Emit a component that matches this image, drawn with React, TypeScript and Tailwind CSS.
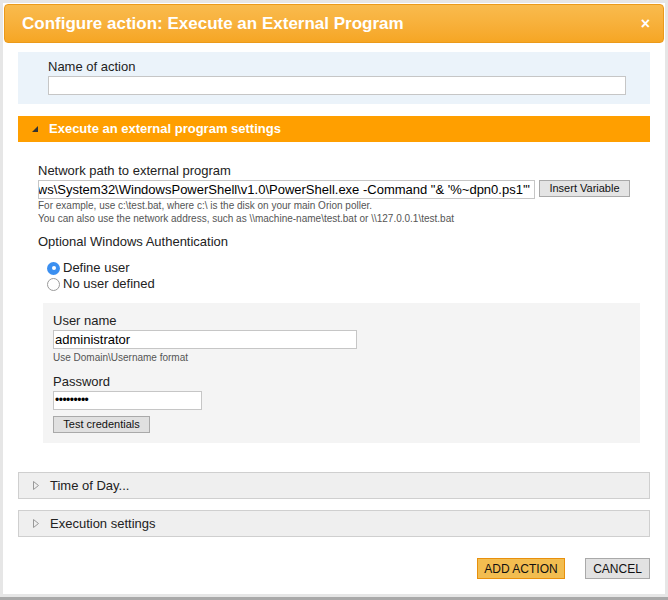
import React from 'react';

const Caret = ({ open }: { open?: boolean }) =>
  open ? (
    <svg width="6" height="6" viewBox="0 0 6 6" className="shrink-0">
      <path d="M6 0 L6 6 L0 6 Z" fill="#333" />
    </svg>
  ) : (
    <svg width="6" height="9" viewBox="0 0 6 9" className="shrink-0">
      <path d="M0.5 0.5 L5.5 4.5 L0.5 8.5 Z" fill="none" stroke="#999" strokeWidth="1" />
    </svg>
  );

const Radio = ({ checked, label }: { checked?: boolean; label: string }) => (
  <label className="flex items-center h-[16px] text-[13px] text-[#222]">
    {checked ? (
      <span className="w-[13px] h-[13px] rounded-full bg-[#3b8ff0] flex items-center justify-center">
        <span className="w-[4px] h-[4px] rounded-full bg-white" />
      </span>
    ) : (
      <span className="w-[13px] h-[13px] rounded-full border border-[#9a9a9a] bg-white" />
    )}
    <span className="ml-[3px]">{label}</span>
  </label>
);

const CollapsedBar = ({ title }: { title: string }) => (
  <div className="h-[27px] bg-[#efefef] border border-[#cfcfcf] flex items-center pl-[14px] gap-[11px] text-[13px] text-[#222]">
    <Caret />
    <span>{title}</span>
  </div>
);

const App = () => {
  return (
    <div className="w-[668px] h-[600px] bg-[#a9a9a9] font-['Liberation_Sans',Arial,sans-serif]">
      <div className="h-[597px] bg-white border-[3px] border-[#e6e6e6] p-[1px] flex flex-col">
        {/* header */}
        <div className="h-[39px] rounded-[4px] border border-[#eb9a1a] bg-gradient-to-b from-[#f9bb4d] to-[#f6a623] flex items-center justify-between pl-[17px] pr-[13px]">
          <h1 className="text-white font-bold text-[17px]">Configure action: Execute an External Program</h1>
          <span className="text-white font-bold text-[16px] leading-none">×</span>
        </div>

        <div className="px-[14px] pt-[9px] flex flex-col">
          {/* name */}
          <div className="h-[52px] bg-[#ebf3fa] pl-[30px] pr-[24px] pt-[7px]">
            <div className="text-[13px] text-[#222] leading-[16px]">Name of action</div>
            <div className="mt-[1px] h-[19px] bg-white border border-[#c6c6c6]" />
          </div>

          {/* orange section bar */}
          <div className="mt-[12px] h-[26px] bg-[#ff9f00] flex items-center pl-[14px] gap-[11px]">
            <Caret open />
            <span className="text-white font-bold text-[13px]">Execute an external program settings</span>
          </div>

          <div className="pl-[20px] pt-[21px]">
            <div className="text-[13px] text-[#222] leading-[16px]">Network path to external program</div>
            <div className="mt-[1px] flex items-start gap-[4px]">
              <div className="w-[497px] h-[19px] bg-white border border-[#c6c6c6] overflow-hidden flex justify-end pr-[4px]">
                <span className="shrink-0 whitespace-nowrap text-[13px] leading-[17px] text-black">
                  C:\Windows\System32\WindowsPowerShell\v1.0\PowerShell.exe -Command "&amp; '%~dpn0.ps1'"
                </span>
              </div>
              <button className="w-[91px] h-[17px] bg-[#e4e4e4] border border-[#a9a9a9] text-[11px] leading-[15px] text-[#111]">
                Insert Variable
              </button>
            </div>
            <div className="text-[10px] leading-[13px] text-[#555]">
              For example, use c:\test.bat, where c:\ is the disk on your main Orion poller.
            </div>
            <div className="text-[10px] leading-[13px] text-[#555]">
              You can also use the network address, such as \\machine-name\test.bat or \\127.0.0.1\test.bat
            </div>

            <div className="mt-[9px] text-[13px] text-[#222] leading-[16px]">Optional Windows Authentication</div>
            <div className="mt-[10px] pl-[9px] flex flex-col">
              <Radio checked label="Define user" />
              <Radio label="No user defined" />
            </div>

            <div className="mt-[11px] ml-[5px] mr-[10px] h-[140px] bg-[#f4f4f4] pl-[10px] pt-[10px]">
              <div className="text-[13px] text-[#222] leading-[16px]">User name</div>
              <div className="mt-[1px] w-[304px] h-[19px] bg-white border border-[#c6c6c6] text-[13px] leading-[17px] text-black pl-[1px]">
                administrator
              </div>
              <div className="mt-[2px] text-[10px] leading-[13px] text-[#555]">Use Domain\Username format</div>
              <div className="mt-[10px] text-[13px] text-[#222] leading-[16px]">Password</div>
              <div className="mt-[1px] w-[149px] h-[19px] bg-white border border-[#c6c6c6] text-[12px] leading-[17px] text-black pl-[1px] tracking-[-0.5px]">
                •••••••••
              </div>
              <button className="mt-[6px] w-[97px] h-[17px] bg-[#e0e0e0] border border-[#a9a9a9] text-[11px] leading-[15px] text-[#111]">
                Test credentials
              </button>
            </div>
          </div>

          <div className="mt-[29px] flex flex-col gap-[11px]">
            <CollapsedBar title="Time of Day..." />
            <CollapsedBar title="Execution settings" />
          </div>

          <div className="mt-[21px] flex justify-end gap-[20px]">
            <button className="w-[88px] h-[21px] bg-[#f2bd50] border border-[#e8900c] text-[12px] text-[#111]">
              ADD ACTION
            </button>
            <button className="w-[65px] h-[21px] bg-[#e2e2e2] border border-[#a9a9a9] text-[12px] text-[#111]">
              CANCEL
            </button>
          </div>
        </div>
      </div>
    </div>
  );
};

export default App;
